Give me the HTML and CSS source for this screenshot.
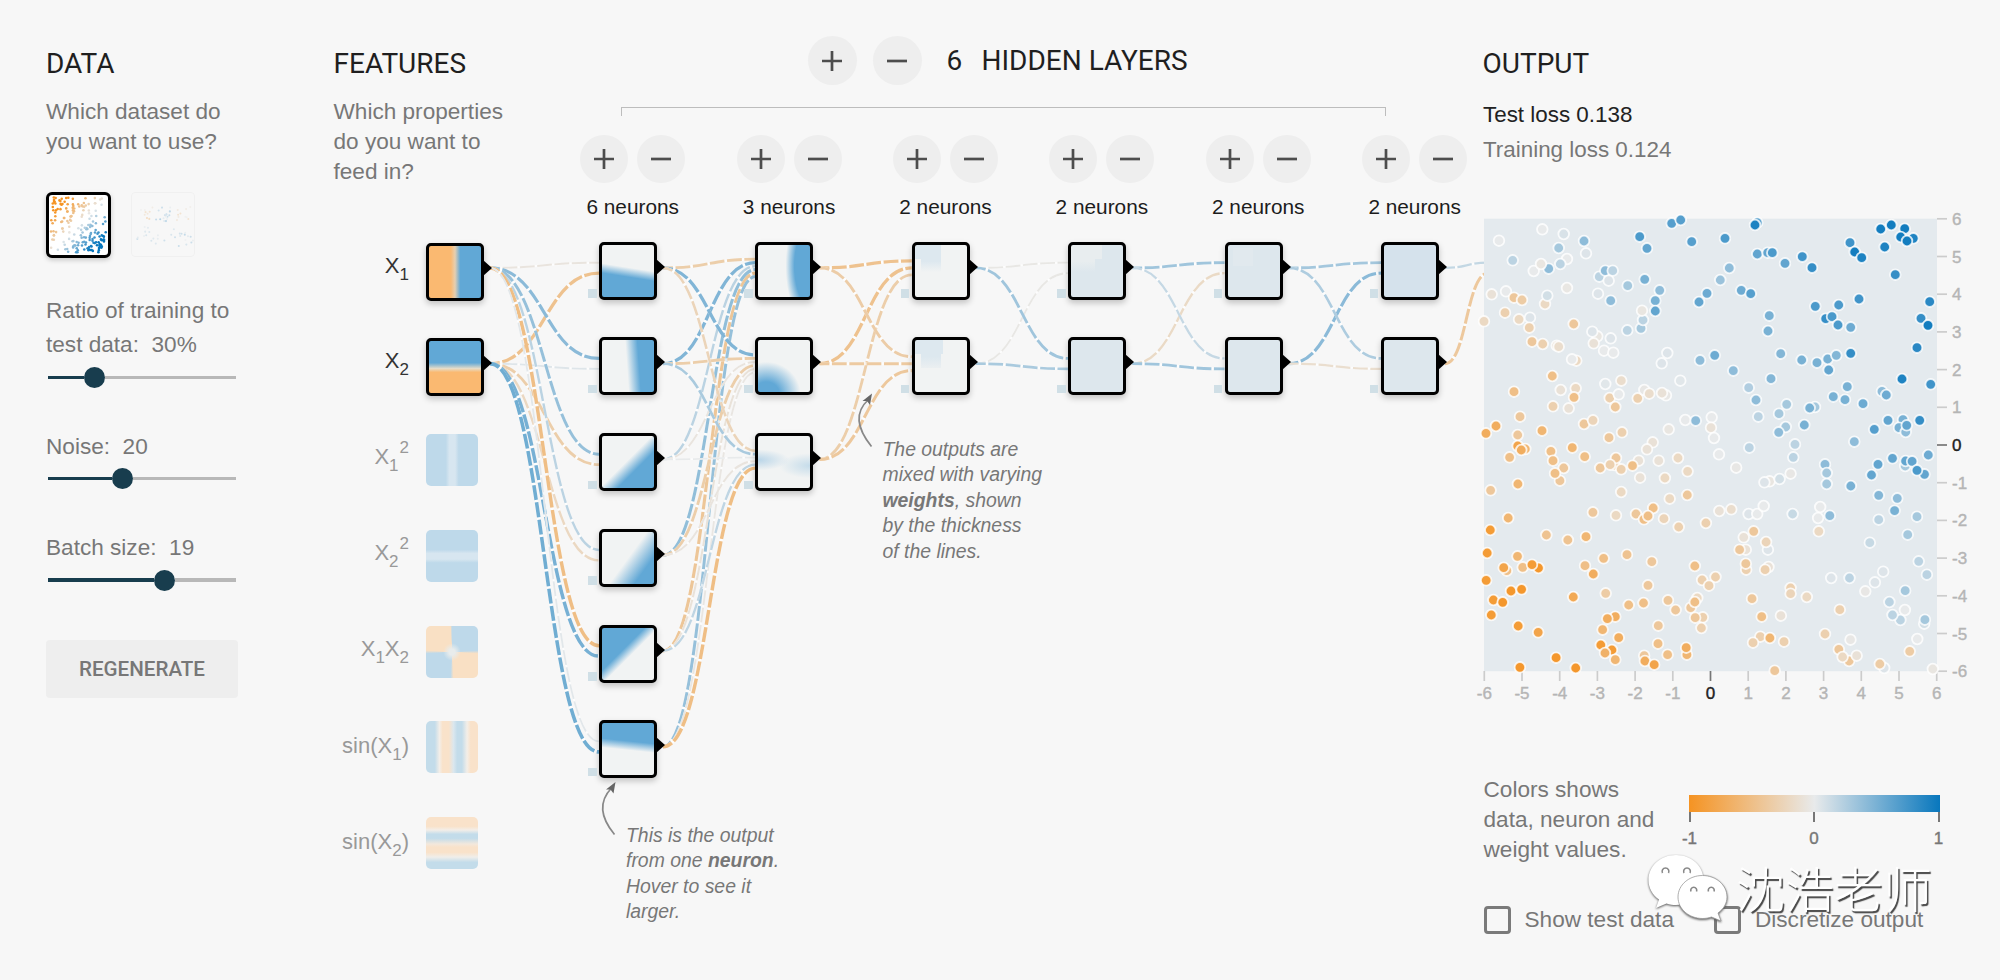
FILE: index.html
```html
<!DOCTYPE html>
<html lang="en">
<head>
    <meta charset="UTF-8">
    <meta name="viewport" content="width=device-width, initial-scale=1.0">
    <title>Neural network playground</title>
    <link rel="stylesheet" href="styles.css">
</head>
<body>

<svg class="icons">
    <symbol id="add" viewBox="0 0 20 20"><path d="M10 0v20M0 10h20"/></symbol>
    <symbol id="remove" viewBox="0 0 20 20"><path d="M0 10h20"/></symbol>
</svg>

<svg class="links" id="links" width="2000" height="980"></svg>

<main class="page">

    <section class="data">
        <h2>DATA</h2>
        <p>Which dataset do<br>you want to use?</p>
        <div class="datasets">
            <svg class="dataset selected" id="plane" viewBox="0 0 60 60"></svg>
            <svg class="dataset" id="gauss" viewBox="0 0 60 60"></svg>
        </div>
        <div class="control ratio">
            <label>Ratio of training to<br>test data:&nbsp; 30%</label>
            <div class="slider"><span class="fill" style="width: 35.5px"></span><span class="thumb"></span><span class="rest"></span></div>
        </div>
        <div class="control noise">
            <label>Noise:&nbsp; 20</label>
            <div class="slider"><span class="fill" style="width: 64px"></span><span class="thumb"></span><span class="rest"></span></div>
        </div>
        <div class="control batch">
            <label>Batch size:&nbsp; 19</label>
            <div class="slider"><span class="fill" style="width: 105.5px"></span><span class="thumb"></span><span class="rest"></span></div>
        </div>
        <button class="regenerate">REGENERATE</button>
    </section>

    <section class="features">
        <h2>FEATURES</h2>
        <p>Which properties<br>do you want to<br>feed in?</p>
        <div class="feature-list">
            <div class="feature active"><span class="name">X<sub>1</sub></span><div class="node x1"></div></div>
            <div class="feature active"><span class="name">X<sub>2</sub></span><div class="node x2"></div></div>
            <div class="feature"><span class="name">X<sub>1</sub><sup>2</sup></span><div class="off x1sq"></div></div>
            <div class="feature"><span class="name">X<sub>2</sub><sup>2</sup></span><div class="off x2sq"></div></div>
            <div class="feature"><span class="name">X<sub>1</sub>X<sub>2</sub></span><div class="off x1x2"></div></div>
            <div class="feature"><span class="name sin">sin(X<sub>1</sub>)</span><div class="off sinx1"></div></div>
            <div class="feature"><span class="name sin">sin(X<sub>2</sub>)</span><div class="off sinx2"></div></div>
        </div>
    </section>

    <section class="hidden-layers">
        <div class="layers-title">
            <button class="round big"><svg><use href="#add"/></svg></button>
            <button class="round big"><svg><use href="#remove"/></svg></button>
            <h2><span class="count">6</span>HIDDEN LAYERS</h2>
        </div>
        <div class="bracket"></div>
        <div class="layers">
            <div class="layer">
                <div class="buttons"><button class="round"><svg><use href="#add"/></svg></button><button class="round"><svg><use href="#remove"/></svg></button></div>
                <div class="neurons-count">6 neurons</div>
                <div class="neurons">
                    <div class="node a1"></div>
                    <div class="node a2"></div>
                    <div class="node a3"></div>
                    <div class="node a4"></div>
                    <div class="node a5"></div>
                    <div class="node a6"></div>
                </div>
            </div>
            <div class="layer">
                <div class="buttons"><button class="round"><svg><use href="#add"/></svg></button><button class="round"><svg><use href="#remove"/></svg></button></div>
                <div class="neurons-count">3 neurons</div>
                <div class="neurons">
                    <div class="node b1"></div>
                    <div class="node b2"></div>
                    <div class="node b3"></div>
                </div>
            </div>
            <div class="layer">
                <div class="buttons"><button class="round"><svg><use href="#add"/></svg></button><button class="round"><svg><use href="#remove"/></svg></button></div>
                <div class="neurons-count">2 neurons</div>
                <div class="neurons">
                    <div class="node c1"></div>
                    <div class="node c2"></div>
                </div>
            </div>
            <div class="layer">
                <div class="buttons"><button class="round"><svg><use href="#add"/></svg></button><button class="round"><svg><use href="#remove"/></svg></button></div>
                <div class="neurons-count">2 neurons</div>
                <div class="neurons">
                    <div class="node pale d1"></div>
                    <div class="node pale"></div>
                </div>
            </div>
            <div class="layer">
                <div class="buttons"><button class="round"><svg><use href="#add"/></svg></button><button class="round"><svg><use href="#remove"/></svg></button></div>
                <div class="neurons-count">2 neurons</div>
                <div class="neurons">
                    <div class="node pale e1"></div>
                    <div class="node pale"></div>
                </div>
            </div>
            <div class="layer">
                <div class="buttons"><button class="round"><svg><use href="#add"/></svg></button><button class="round"><svg><use href="#remove"/></svg></button></div>
                <div class="neurons-count">2 neurons</div>
                <div class="neurons">
                    <div class="node pale f1"></div>
                    <div class="node pale"></div>
                </div>
            </div>
        </div>
    </section>

    <section class="output">
        <h2>OUTPUT</h2>
        <div class="loss test">Test loss 0.138</div>
        <div class="loss">Training loss 0.124</div>
        <svg class="heatmap" id="heatmap" width="516" height="500"></svg>
        <div class="legend">
            <p>Colors shows<br>data, neuron and<br>weight values.</p>
            <div class="scale">
                <div class="colormap"></div>
                <div class="ticks"><i></i><i></i><i></i></div>
                <div class="tick-labels"><span>-1</span><span>0</span><span>1</span></div>
            </div>
        </div>
        <div class="options">
            <label><span class="box"></span>Show test data</label>
            <label><span class="box"></span>Discretize output</label>
        </div>
    </section>
</main>

<svg class="arrows" width="2000" height="980">
    <path d="M871.5 446.500Q848.500 418 868 400"/>
    <path class="head" d="M872 393.500L870 405L867 401L862.500 401Z"/>
    <path d="M614.500 834.500Q592.500 808 611.500 788"/>
    <path class="head" d="M615.500 782L613.500 793.500L610.500 789.500L606 789.500Z"/>
</svg>
<div class="callout weights">The outputs are<br>mixed with varying<br><b>weights</b>, shown<br>by the thickness<br>of the lines.</div>
<div class="callout neuron">This is the output<br>from one <b>neuron</b>.<br>Hover to see it<br>larger.</div>

<div class="watermark">
    <svg width="84" height="74" viewBox="0 0 84 74">
        <path d="M29 2C13.500 2 1.500 13 1.500 27C1.500 35 5.500 42 12 46.500L9 55L19.500 50.500C22.500 51.500 26 52 29 52C44.500 52 56.500 41 56.500 27S44.500 2 29 2Z"/>
        <path class="front" d="M55.500 22.500C42 22.500 31 32 31 44S42 65.500 55.500 65.500C58.500 65.500 61.500 65 64.500 64L74 68L71 60C76.500 56 80 50.500 80 44C80 32 69 22.500 55.500 22.500Z"/>
        <g class="eyes">
            <path d="M15.500 20a3.400 3.400 0 1 1 6 0M37 20a3.400 3.400 0 1 1 6 0M44 38.500a3 3 0 1 1 5.500 0M61.500 38.500a3 3 0 1 1 5.500 0"/>
        </g>
    </svg>
    <span>沈浩老师</span>
</div>

<script src="script.js"></script>
</body>
</html>
```

FILE: styles.css
```css
body {
    margin: 0;
    width: 2000px;
    height: 980px;
    overflow: hidden;
    position: relative;
    background-color: #f7f7f7;
    color: #777;
    font-family: "Liberation Sans", Arial, sans-serif;
    font-size: 22.6px;
}
h2 {
    margin: 0;
    font-family: Roboto, sans-serif;
    font-size: 28px;
    font-weight: 400;
    line-height: 32px;
    color: #1f1f1f;
}
p {
    margin: 17px 0 0;
    line-height: 30px;
}
button {
    border: none;
    padding: 0;
    background-color: #eee;
}
.icons {
    display: none;
}
.page {
    display: grid;
    grid-template-columns: 287.500px 221px 929px 1fr;
    padding-left: 46px;
}

/* data */
.data {
    width: 192px;
    padding-top: 48px;
    white-space: nowrap;
}
.datasets {
    display: flex;
    gap: 20px;
    margin-top: 35px;
}
.dataset {
    box-sizing: border-box;
    width: 64px;
    height: 65px;
    border: 1.5px solid #e6e6e6;
    border-radius: 4px;
    opacity: 0.4;
}
.dataset.selected {
    width: 65px;
    height: 66px;
    border: 3px solid #000;
    border-radius: 6px;
    background-color: #fff;
    box-shadow: 0 2px 5px rgba(0, 0, 0, 0.2);
    opacity: 1;
}
.control label {
    display: block;
    line-height: 34.400px;
}
.control.ratio {
    margin-top: 36px;
}
.control.noise {
    margin-top: 42px;
}
.control.batch {
    margin-top: 42px;
}
.slider {
    display: flex;
    align-items: center;
    width: 188px;
    height: 21px;
    margin: 4px 0 0 2px;
}
.slider .fill,
.slider .rest {
    height: 3px;
    background-color: #183d4e;
}
.slider .rest {
    flex: 1;
    background-color: #b8b8b8;
}
.batch .fill,
.batch .rest {
    height: 4.600px;
}
.slider .thumb {
    width: 21px;
    height: 21px;
    border-radius: 50%;
    background-color: #183d4e;
}
.regenerate {
    display: block;
    width: 192px;
    height: 58px;
    margin-top: 49px;
    border-radius: 4px;
    font: 500 20.600px Roboto, sans-serif;
    color: #777;
}

/* features */
.features {
    padding-top: 48px;
}
.feature-list {
    display: flex;
    flex-direction: column;
    gap: 37.750px;
    margin-top: 55.500px;
    padding-left: 0.5px;
}
.feature {
    display: flex;
    gap: 17px;
    height: 58px;
}
.name {
    width: 75px;
    text-align: right;
    white-space: nowrap;
    line-height: 46px;
    font-size: 22px;
    color: #999;
}
.name.sin {
    line-height: 50px;
}
.active .name {
    color: #333;
}
.name sub,
.name sup {
    position: relative;
    font-size: 17px;
    line-height: 0;
    vertical-align: baseline;
}
.name sub {
    top: 7px;
}
.name sup {
    top: -11px;
    margin-left: 1px;
}
.off {
    width: 52px;
    height: 52px;
    border-radius: 5px;
}

/* nodes */
.node {
    position: relative;
    z-index: 2;
    width: 52px;
    height: 52px;
    border: 3px solid #000;
    border-radius: 5px;
    background-color: #f1f3f3;
    background-origin: padding-box;
    background-repeat: no-repeat;
    box-shadow: 0 3px 6px rgba(0, 0, 0, 0.22);
}
.node::after {
    content: "";
    position: absolute;
    left: 54px;
    top: 14px;
    border-left: 9px solid #000;
    border-top: 8.500px solid transparent;
    border-bottom: 8.500px solid transparent;
}
.neurons .node::before {
    content: "";
    position: absolute;
    left: -14px;
    top: 44.500px;
    width: 8.500px;
    height: 8.500px;
    background-color: #d0dfe6;
}
.x1 { background-image: linear-gradient(90deg, #fab971 42%, #e6cfb0 50%, #61a8d6 60%); }
.x2 { background-image: linear-gradient(180deg, #61a8d6 42%, #e6dcc8 53%, #fab971 60%); }
.x1sq { background: linear-gradient(90deg, #bed9ea 38%, #d7e6f0 45%, #d7e6f0 56%, #bed9ea 63%); }
.x2sq { background: linear-gradient(180deg, #bed9ea 38%, #d7e6f0 45%, #d7e6f0 56%, #bed9ea 63%); }
.x1x2 {
    background: radial-gradient(circle, #e8ecec 8%, rgba(232, 236, 236, 0) 24%),
        conic-gradient(#bed9ea 24%, #f9e0c4 26%, #f9e0c4 49%, #bed9ea 51%, #bed9ea 74%, #f9e0c4 76%, #f9e0c4 99%, #bed9ea);
}
.sinx1 { background: linear-gradient(90deg, #c3dcea 17%, #f3eee8 26%, #f9e2ca 32%, #f9e2ca 44%, #dbe7ee 53%, #c3dcea 60%, #c3dcea 69%, #f3eee8 79%, #f9e2ca 86%); }
.sinx2 { background: linear-gradient(180deg, #f9e2ca 18%, #f3eee8 25%, #c3dcea 33%, #c3dcea 41%, #f3e8dc 52%, #f9e2ca 58%, #f9e2ca 68%, #f0eeea 77%, #c3dcea 87%); }
.a1 { background-image: linear-gradient(189deg, #f1f3f3 44%, #61a8d6 60%); }
.a2 { background-image: linear-gradient(86deg, #f1f3f3 48%, #61a8d6 70%); }
.a3 { background-image: linear-gradient(135deg, #f1f3f3 48%, #61a8d6 65%); }
.a4 { background-image: linear-gradient(126deg, #f1f3f3 50%, #61a8d6 78%); }
.a5 { background-image: linear-gradient(135deg, #61a8d6 41%, #f1f3f3 54%); }
.a6 { background-image: linear-gradient(186deg, #61a8d6 36%, #f1f3f3 52%); }
.b1 { background-image: radial-gradient(ellipse 52% 120% at 105% 40%, #61a8d6 67%, #f1f3f3 100%); }
.b2 { background-image: radial-gradient(ellipse 66% 62% at 16% 104%, #61a8d6 38%, #f1f3f3 100%); }
.b3 {
    background-image: radial-gradient(ellipse 60% 20% at 0 46%, #b9d5e8, rgba(241, 243, 243, 0)),
        radial-gradient(ellipse 60% 24% at 100% 57%, #c5dcea, rgba(241, 243, 243, 0));
}
.c1 {
    background-image: linear-gradient(#dde8ef, #dde8ef), linear-gradient(#dde8ef 60%, #f1f3f3);
    background-size: 26px 14px, 20px 27px;
    background-position: 0 0, 6px 0;
}
.c2 {
    background-image: linear-gradient(#dde8ef, #dde8ef), linear-gradient(#dde8ef 60%, #ebeff1);
    background-size: 28px 14px, 20px 28px;
    background-position: 0 0, 6px 0;
}
.node.pale { background-color: #dde7ed; }
.d1 {
    background-image: linear-gradient(#e8edef, #e8edef), linear-gradient(#e8edef 60%, #dde7ed);
    background-size: 31px 14px, 24px 27px;
}
.e1 {
    background-image: linear-gradient(#e1e9ee, #e1e9ee);
    background-size: 20px 18px;
    background-position: 5px 3px;
}
.node.f1 { background-color: #d5e2ec; }

/* hidden layers */
.hidden-layers {
    padding-top: 36px;
}
.layers-title {
    display: flex;
    align-items: center;
    padding-left: 253px;
    gap: 16px;
    height: 49px;
}
.layers-title h2 {
    margin: 0 0 0 9px;
    white-space: nowrap;
}
.layers-title .count {
    display: inline-block;
    width: 35px;
}
.round {
    display: flex;
    align-items: center;
    justify-content: center;
    flex: none;
    width: 48px;
    height: 48px;
    border-radius: 50%;
}
.round.big {
    width: 49px;
    height: 49px;
}
.round svg {
    width: 20px;
    height: 20px;
    stroke: #4d4d4d;
    stroke-width: 2.7;
    fill: none;
}
.bracket {
    width: 763px;
    height: 8px;
    margin: 22px 0 19px 66px;
    border: 1.5px solid #bdbdbd;
    border-bottom: none;
}
.layers {
    display: flex;
}
.layer {
    flex: none;
    width: 156.400px;
}
.buttons {
    display: flex;
    justify-content: center;
    gap: 9px;
}
.neurons-count {
    margin-top: 11px;
    line-height: 26px;
    font-size: 20.800px;
    text-align: center;
    color: #1c1c1c;
}
.neurons {
    display: flex;
    flex-direction: column;
    gap: 37.750px;
    margin: 21.500px 0 0 44.500px;
}
.links {
    position: absolute;
    left: 0;
    top: 0;
    fill: none;
}

/* output */
.output {
    position: relative;
    z-index: 3;
    padding-top: 48px;
    white-space: nowrap;
}
.output h2 {
    margin-left: -1px;
}
.loss {
    line-height: 35px;
    margin-left: -0.5px;
    font-size: 22.400px;
}
.loss.test {
    margin-top: 17px;
    color: #222;
}
.heatmap {
    display: block;
    margin: 47px 0 0 -9.500px;
    overflow: visible;
}
.heatmap text {
    font-size: 17px;
    fill: #b5b5b5;
    stroke: #b5b5b5;
    stroke-width: 0.4;
}
.heatmap text.zero {
    fill: #222;
    stroke: #222;
}
.heatmap line {
    stroke: #ccc;
    stroke-width: 1.7;
}
.heatmap line.zero {
    stroke: #777;
}
.heatmap circle {
    stroke: #fff;
    stroke-opacity: 0.8;
    stroke-width: 1.8;
}
.legend {
    display: flex;
    margin-top: 61px;
}
.legend p {
    width: 205px;
    margin: 0;
}
.scale {
    width: 251px;
    padding-top: 20px;
}
.colormap {
    height: 17px;
    background: linear-gradient(90deg, #f59322, #e8eaeb 50%, #0877bd);
}
.ticks {
    display: flex;
    justify-content: space-between;
}
.ticks i {
    width: 2px;
    height: 10px;
    background-color: #777;
}
.tick-labels {
    display: flex;
    justify-content: space-between;
    margin: 6px -8px 0;
    font-size: 17px;
    line-height: 22px;
    -webkit-text-stroke: 0.4px #777;
}
.tick-labels span {
    width: 18px;
    text-align: center;
}
.options {
    display: flex;
    margin-top: 41px;
    gap: 40px;
}
.options label {
    display: flex;
    align-items: center;
    height: 28px;
}
.box {
    width: 21px;
    height: 22px;
    margin-right: 14px;
    border: 3px solid #7a7a7a;
    border-radius: 4px;
}

/* notes over the network */
.arrows {
    position: absolute;
    left: 0;
    top: 0;
    z-index: 3;
    fill: none;
    stroke: #888;
    stroke-width: 1.7;
}
.arrows .head {
    fill: #666;
    stroke: none;
}
.callout {
    position: absolute;
    font-size: 19.400px;
    font-style: italic;
    line-height: 25.400px;
    white-space: nowrap;
}
.callout.weights {
    left: 882.500px;
    top: 437px;
}
.callout.neuron {
    left: 626px;
    top: 823px;
}
.watermark {
    position: absolute;
    left: 1647px;
    top: 853px;
    z-index: 4;
    display: flex;
    color: #fff;
}
.watermark svg {
    fill: #fff;
    filter: drop-shadow(0.5px 1.5px 0.8px #555);
}
.watermark .front {
    stroke: #999;
    stroke-width: 0.8;
}
.watermark .eyes {
    fill: none;
    stroke: #888;
    stroke-width: 1.6;
}
.watermark span {
    margin: -3px 0 0 5px;
    font: 300 49px/74px "Noto Sans CJK SC", sans-serif;
    text-shadow: 1.5px 1.5px 1px #444;
}
```

FILE: script.js
```js
var NS = "http://www.w3.org/2000/svg";

function add(parent, tag, attrs, text) {
    var el = document.createElementNS(NS, tag);
    for (var key in attrs) {
        el.setAttribute(key, attrs[key]);
    }
    if (text !== undefined) {
        el.textContent = text;
    }
    parent.appendChild(el);
    return el;
}

// -1 is orange, 0 is grey, 1 is blue
function color(v) {
    var zero = [232, 234, 235];
    var end = v < 0 ? [245, 147, 34] : [8, 119, 189];
    var t = Math.min(Math.abs(v), 1);
    return "rgb(" + zero.map(function(c, i) {
        return Math.round(c + (end[i] - c) * t);
    }).join(",") + ")";
}

// ---- links between the nodes ----
var layerX = [426, 599, 755.4, 911.8, 1068.2, 1224.6, 1381, 1488];

// weights[layer][target][source]
var weights = [
    [[-0.07, -0.5], [0.45, 0.05], [0.4, -0.35], [0.22, -0.22], [-0.55, 0.55], [0.03, 0.58]],
    [[-0.35, 0.5, 0.22, 0.42, -0.45, 0.4], [0.5, -0.35, -0.07, -0.35, -0.1, -0.05], [-0.27, 0.3, 0, -0.07, 0.2, -0.55]],
    [[-0.5, -0.5, -0.35], [-0.37, -0.4, -0.42]],
    [[-0.04, -0.04], [0.35, 0.3]],
    [[0.35, -0.2], [0.17, 0.35]],
    [[0.33, 0.45], [0.28, -0.15]],
    [[0.18, -0.42]]
];

function nodeY(i) {
    return 267.9 + 95.75 * i;
}

var links = document.getElementById("links");
weights.forEach(function(targets, layer) {
    targets.forEach(function(sources, t) {
        sources.forEach(function(w, s) {
            var x1 = layerX[layer] + 64;
            var x2 = layerX[layer + 1];
            var mid = (x1 + x2) / 2;
            var y1 = nodeY(s);
            var y2 = nodeY(t) + (s - (sources.length - 1) / 2) / sources.length * 20.9;
            var d = "M" + x1 + " " + y1 + "C" + mid + " " + y1 + " " + mid + " " + y2 + " " + x2 + " " + y2;
            var width = (1 + 1.8 * Math.abs(w)) * 1.74;
            add(links, "path", {d: d, stroke: "#fff", "stroke-opacity": 0.7, "stroke-width": width});
            add(links, "path", {d: d, stroke: color(w * 0.92), "stroke-width": width, "stroke-dasharray": "14.9 2.5", "stroke-dashoffset": 5});
        });
    });
});

// ---- output heatmap ----
var heatmap = document.getElementById("heatmap");
var plot = add(heatmap, "g", {transform: "translate(-1474,-214)"});
add(plot, "rect", {x: 1484, y: 218.7, width: 453, height: 452.5, fill: "#e4eaee"});

for (var n = -6; n <= 6; n++) {
    var cls = n === 0 ? "zero" : "";
    var tx = 1710.5 + n * 37.7;
    var ty = 445 - n * 37.7;
    add(plot, "line", {x1: tx, x2: tx, y1: 671, y2: 681, "class": cls});
    add(plot, "text", {x: tx, y: 698.5, "text-anchor": "middle", "class": cls}, n);
    add(plot, "line", {x1: 1937, x2: 1947, y1: ty, y2: ty, "class": cls});
    add(plot, "text", {x: 1952, y: ty + 6, "class": cls}, n);
}

// points are kept in three tiles: x, y, value (in tenths)
var tiles = [
    {x: 1460, y: 200, sx: 3, sy: 3, points: [
        [117,122,0],[158,181,2],[247,88,0],[311,102,0.7],[296,144,3],[372,123,4],[378,160,0.5],[321,177,0],[301,192,2],[266,206,4],
        [221,213,0],[243,192,-0.5],[138,274,0],[95,283,-1],[162,293,-4],[186,300,-3.5],[255,312,-2],[262,287,1],[321,264,-0.4],
        [418,230,2],[436,212,4],[458,212,2],[446,242,0.5],[503,257,3],[554,238,5],[539,110,7],[561,145,6],[635,70,6.5],[662,60,6.5],
        [695,125,6.5],[781,240,3.5],[741,280,5.5],[717,306,6],[599,271,4],[586,302,5],[586,333,6],[543,385,3],[549,360,2],[546,332,-0.5],
        [502,391,2],[414,281,0.5],[452,302,4],[135,338,-3],[72,364,-2],[177,358,-2],[210,353,0.5],[208,383,-3],[341,372,-4],
        [216,425,-4],[248,432,-3],[290,437,-1],[296,440,-1.5],[349,482,-2],[336,478,0],[412,409,-0.5],[397,395,0.5],[401,430,-1],
        [452,415,0.5],[432,452,0],[460,458,0],[622,459,0.5],[605,490,0.5],[720,481,4],[764,466,5.5],[277,528,-5],[162,575,-5],
        [302,570,-1],[347,565,-2],[342,592,-5],[279,619,-3],[326,625,-1],[436,552,0.3],[484,542,-1.5],[449,594,-3],[476,583,0],
        [466,621,-4],[533,595,-3],[553,570,-0.3],[568,581,-1.5],[618,586,-0.3],[606,579,-1],[661,542,0.3],[180,650,-4],[108,678,-7],
        [78,700,-7],[173,705,-4],[246,692,-6],[173,738,-8],[196,747,-6],[184,750,-7],[337,743,-6],[372,672,-4],[399,661,-2.5],
        [447,713,-4],[486,697,-3],[626,688,-0.5],[676,660,0],[707,662,4],[755,652,0],[753,683,-1],[762,714,0],[578,727,-1],[561,748,-1]
    ]},
    {x: 1720, y: 200, sx: 3, sy: 3, points: [
        [112,68,6],[105,75,9],[15,115,7],[112,162,6],[143,158,6],[157,158,7],[28,204,4],[64,271,5.5],[92,281,6.5],[148,347,5],
        [144,393,5],[182,461,4.5],[40,512,4],[153,536,4.5],[86,563,2.5],[108,600,4],[115,650,2],[88,743,2],[200,613,3],[177,641,3],
        [197,681,3],[176,697,4],[225,733,2],[195,190,6],[247,170,7.5],[276,203,8],[286,319,7],[356,315,7],[417,297,7.5],[317,356,8],
        [336,350,7],[354,375,7],[392,382,5.5],[392,460,8],[245,480,5],[291,488,5],[323,477,5],[349,466,4.5],[326,510,6],[382,560,5],
        [340,590,5],[375,599,5],[285,621,3],[269,624,5],[253,675,5],[429,611,5.5],[403,725,4],[390,128,7.5],[404,156,9.5],[425,173,9],
        [482,87,9.5],[514,75,9.5],[554,86,9.5],[542,111,9.5],[580,115,9],[561,123,9.5],[494,141,9],[526,224,8],[629,305,8.5],[603,355,8],
        [624,376,9.5],[591,443,8.5],[546,537,9],[632,553,7.5],[486,574,4],[499,585,5.5],[463,688,6.5],[504,661,6],[599,661,8],
        [549,659,5],[537,683,5],[557,696,4],[560,676,6]
    ]},
    {x: 1460, y: 450, sx: 2.904, sy: 3, points: [
        [144,22,-5],[264,4,-5],[270,32,-5],[362,20,-5],[448,45,-3],[453,24,-4],[519,32,-1],[577,32,-1],[633,24,-2],[661,64,-2],
        [752,13,0],[802,53,-0.3],[968,22,2],[301,54,-4],[290,92,-4],[276,70,-5],[168,102,-6],[89,121,-4],[407,54,-4],[436,44,-3],
        [468,58,-3],[501,47,-5],[523,83,-1],[595,84,-2],[468,126,-2],[609,146,-2],[660,135,-4],[386,187,-4],[453,196,-2],[511,192,-4],
        [561,174,-5],[534,208,-5],[546,198,-5],[592,206,-2.5],[635,231,-3],[714,219,-3],[753,183,-1],[788,178,-1.5],[140,204,-6],
        [88,240,-9],[251,255,-4.5],[313,270,-4.5],[366,260,-6],[79,309,-9],[167,319,-6],[182,352,-5],[228,354,-9.5],[209,344,-9],
        [136,362,-5],[127,353,-8],[76,391,-9],[148,423,-9.5],[179,418,-9.5],[97,450,-9],[124,457,-9.5],[91,495,-9],[169,528,-9],
        [227,547,-8],[279,623,-9.5],[174,652,-9.5],[336,654,-9.5],[363,347,-5],[387,372,-7],[417,325,-5],[485,314,-4.5],[557,335,-4],
        [329,441,-7.5],[423,430,-3.5],[490,465,-5],[533,459,-5],[546,406,-4],[604,451,-4],[626,480,-4],[682,348,-5],[703,390,-3],
        [742,381,-3],[723,407,-3],[689,444,-2],[670,473,-4],[682,456,-5],[705,502,-3],[683,503,-4],[701,534,-3],[451,500,-7],
        [428,506,-7],[414,539,-6],[461,563,-7],[409,585,-9],[441,600,-9],[421,609,-6.5],[451,629,-6],[576,527,-4],[575,581,-5],
        [603,614,-5],[535,617,-4],[537,633,-7],[564,644,-8],[659,614,-6],[657,593,-7],[848,446,-4],[876,500,-5],[932,497,-1],
        [872,560,-3],[851,578,-3],[900,564,-6],[941,575,-3],[914,662,-4],[960,414,-3],[960,431,-2.5],[1007,441,-2],[1103,479,-3],
        [1060,552,-3],[1100,598,-4],[1130,633,-4],[1111,621,-2],[1152,617,-1],[1134,569,-0.3],[1232,654,0.5],[1219,642,-3.5],
        [1306,604,-3.5],[1373,657,-0.5],[1328,567,0],[1348,521,1],[1350,509,3],[1279,510,2],[1256,495,2],[1292,480,0],[1247,456,2],
        [1293,422,3],[1177,424,-0.3],[1205,397,0.5],[1229,365,0.5],[1131,384,2],[1078,384,0.5],[1356,374,2],[1332,334,2],
        [1190,278,1.5],[1300,254,3],[853,244,-4],[824,262,-1],[830,299,-1],[812,299,-4],[894,299,0.5],[889,276,-2.5],[831,359,-3],
        [830,341,-4],[896,351,-1],[886,359,-3],[1042,244,-2],[1040,204,0],[1046,171,0],[1074,197,4],[1216,209,2],[1262,182,5],
        [1270,145,4],[1216,136,4.5],[1327,200,3],[838,192,0.5],[863,192,0],[882,168,0],[966,192,1.5],[899,94,-0.5],[884,97,0.5],
        [928,87,1],[960,71,-0.3],[1060,43,4],[1065,69,3],[1065,102,3],[1135,108,5],[1195,75,6],[1214,43,6],[1256,25,6],
        [1293,48,3],[1294,33,6],[1313,34,6],[1349,73,6],[1327,61,7],[1360,15,5.5]
    ]}
];

tiles.forEach(function(tile) {
    tile.points.forEach(function(p) {
        add(plot, "circle", {
            cx: (tile.x + p[0] / tile.sx).toFixed(1),
            cy: (tile.y + p[1] / tile.sy).toFixed(1),
            r: 5.3,
            fill: color(p[2] / 10)
        });
    });
});

// ---- dataset thumbnails ----
var seed = 7;
function random() {
    seed = (seed * 16807) % 2147483647;
    return seed / 2147483647;
}

var plane = document.getElementById("plane");
for (var i = 0; i < 230; i++) {
    var px = 2 + random() * 56;
    var py = 2 + random() * 56;
    var v = (px + py - 60) / 45;
    // keep the middle band thin
    if (Math.abs(v) < 0.25 && random() < 0.6) {
        continue;
    }
    add(plane, "circle", {cx: px, cy: py, r: 1.3, fill: color(v * 1.2)});
}

var gauss = document.getElementById("gauss");
[[30, 20, 0.7, 18], [15, 19, -0.6, 9], [50, 19, -0.5, 10], [10, 38, 0.4, 8], [52, 45, 0.6, 12], [20, 45, 0.3, 5], [35, 39, 0.4, 4]].forEach(function(c) {
    for (var k = 0; k < c[3]; k++) {
        add(gauss, "circle", {
            cx: c[0] + (random() - 0.5) * 14,
            cy: c[1] + (random() - 0.5) * 14,
            r: 1,
            fill: color(c[2] * random())
        });
    }
});
```
